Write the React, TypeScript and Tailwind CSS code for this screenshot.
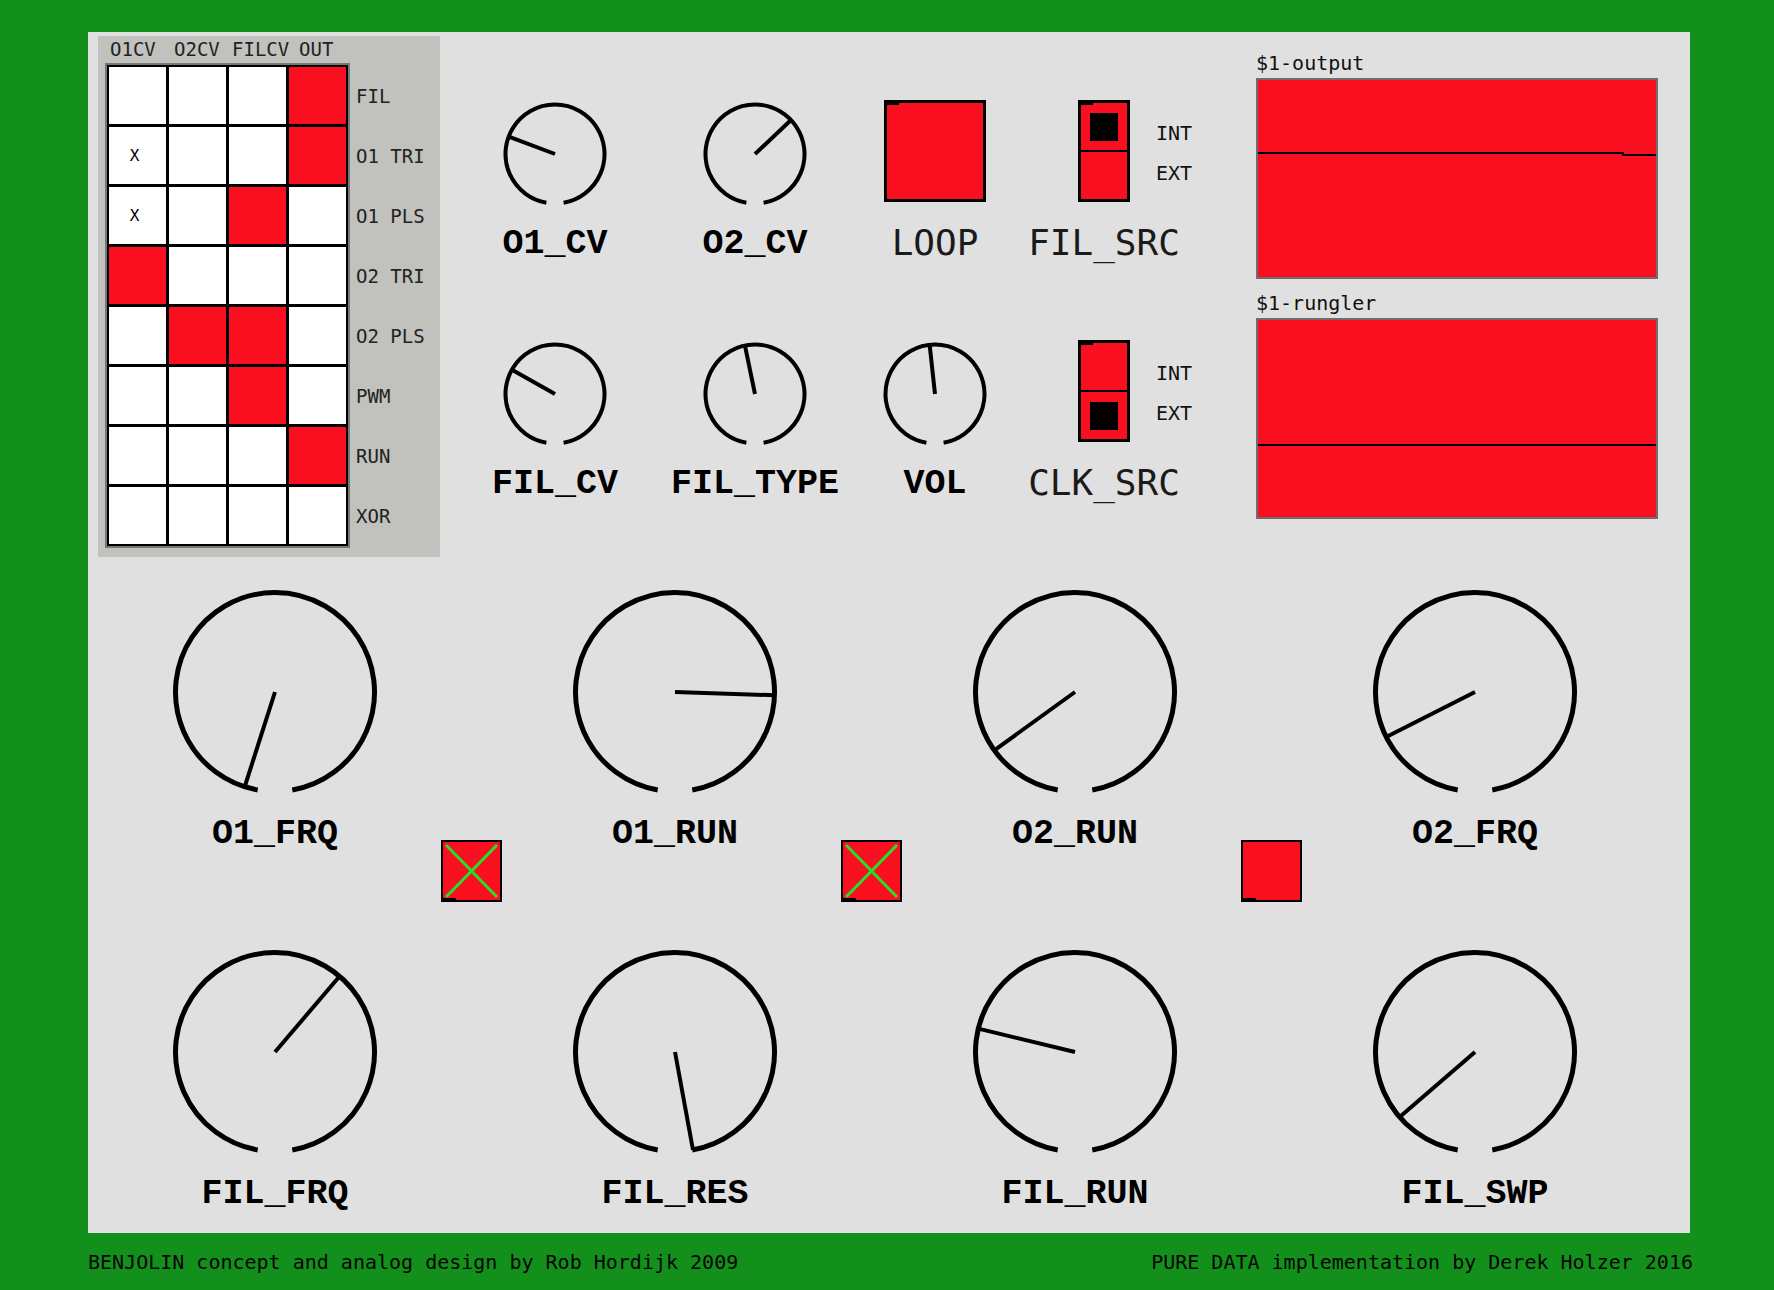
import React from 'react'

const matrix = [
  [0, 0, 0, 1],
  [2, 0, 0, 1],
  [2, 0, 1, 0],
  [1, 0, 0, 0],
  [0, 1, 1, 0],
  [0, 0, 1, 0],
  [0, 0, 0, 1],
  [0, 0, 0, 0],
]
const rowLabels = ['FIL', 'O1 TRI', 'O1 PLS', 'O2 TRI', 'O2 PLS', 'PWM', 'RUN', 'XOR']

const mono = { fontFamily: '"DejaVu Sans Mono", "Liberation Mono", monospace' }
const bold = { fontFamily: '"Liberation Mono", "DejaVu Sans Mono", monospace' }

function Knob({ size, r, sw, pw, dx, dy }: { size: number; r: number; sw: number; pw: number; dx: number; dy: number }) {
  const c = size / 2
  const a = (10 * Math.PI) / 180
  const x1 = c - r * Math.sin(a)
  const x2 = c + r * Math.sin(a)
  const y = c + r * Math.cos(a)
  const len = Math.hypot(dx, dy)
  const ex = c + (dx / len) * r
  const ey = c + (dy / len) * r
  return (
    <svg width={size} height={size} viewBox={`0 0 ${size} ${size}`}>
      <path d={`M${x1} ${y} A${r} ${r} 0 1 1 ${x2} ${y}`} fill="none" stroke="#000" strokeWidth={sw} />
      <line x1={c} y1={c} x2={ex} y2={ey} stroke="#000" strokeWidth={pw} />
    </svg>
  )
}

function SmallKnob({ label, dx, dy }: { label: string; dx: number; dy: number }) {
  return (
    <div className="flex h-[240px] flex-col items-center">
      <div className="flex h-[120px] w-full items-center justify-center">
        <Knob size={112} r={49.5} sw={4} pw={4} dx={dx} dy={dy} />
      </div>
      <div style={bold} className="mt-[12px] whitespace-nowrap text-[35px] font-bold leading-[36px] text-black">
        {label}
      </div>
    </div>
  )
}

function Radio({ label, sel }: { label: string; sel: number }) {
  return (
    <div className="flex h-[240px] flex-col items-center">
      <div className="-mt-[3px] flex h-[120px] w-full items-center pl-[49px]">
        <div className="relative flex h-[102px] w-[52px] shrink-0 flex-col border-[3px] border-black bg-[#f90f1f]">
          <span className="absolute -left-[3px] -top-[3px] h-[5px] w-[15px] bg-black" />
          <div className="flex h-[47px] items-center justify-center">
            {sel === 0 && <div className="h-[28px] w-[28px] bg-black" />}
          </div>
          <div className="h-[2px] bg-black" />
          <div className="flex h-[47px] items-center justify-center">
            {sel === 1 && <div className="h-[28px] w-[28px] bg-black" />}
          </div>
        </div>
        <div style={mono} className="ml-[26px] mt-[3px] flex shrink-0 flex-col gap-[20px] text-[20px] leading-[20px] text-[#111]">
          <span>INT</span>
          <span>EXT</span>
        </div>
      </div>
      <div style={mono} className="mt-[14px] whitespace-nowrap text-[36px] leading-[36px] text-[#1a1a1a]">
        {label}
      </div>
    </div>
  )
}

function Scope({ label, line }: { label: string; line: string }) {
  return (
    <div className="flex flex-col">
      <div style={mono} className="h-[24px] text-[20px] leading-[24px] text-[#111]">
        {label}
      </div>
      <div className="mt-[3px] h-[201px] w-[402px] border-2 border-[#6e6e6e] bg-[#f90f1f]">
        <svg width="398" height="197" viewBox="0 0 398 197">
          <polyline points={line} fill="none" stroke="#000" strokeWidth="2" />
        </svg>
      </div>
    </div>
  )
}

function BigKnob({ label, dx, dy }: { label: string; dx: number; dy: number }) {
  return (
    <div className="flex w-[300px] flex-col items-center">
      <Knob size={210} r={99.5} sw={5} pw={4} dx={dx} dy={dy} />
      <div style={bold} className="mt-[19px] whitespace-nowrap text-[35px] font-bold leading-[36px] text-black">
        {label}
      </div>
    </div>
  )
}

function Toggle({ on }: { on: boolean }) {
  return (
    <div className="w-[100px] pl-[16px] pt-[253px]">
      <div className="relative h-[62px] w-[61px] border-2 border-black bg-[#f90f1f]">
        {on && (
          <svg width="57" height="58" viewBox="0 0 57 58" className="block">
            <line x1="3" y1="3" x2="54" y2="55" stroke="#22e12b" strokeWidth="3" />
            <line x1="54" y1="3" x2="3" y2="55" stroke="#22e12b" strokeWidth="3" />
          </svg>
        )}
        <span className="absolute -bottom-[2px] -left-[2px] h-[4px] w-[15px] bg-black" />
      </div>
    </div>
  )
}

export default function App() {
  return (
    <div className="h-[1290px] w-[1774px] bg-[#13901b] pl-[88px] pt-[32px]">
      <div className="h-[1201px] w-[1602px] bg-[#e0e0e0]">
        <div className="flex h-[542px] items-start">
          {/* connection matrix */}
          <div className="ml-[10px] mt-[4px] h-[521px] w-[342px] shrink-0 bg-[#c1c1bd]">
            <div style={mono} className="flex h-[27px] pl-[12px] pt-[1px] text-[19px] leading-[24px] text-[#222]">
              <span className="w-[64px]">O1CV</span>
              <span className="w-[58px]">O2CV</span>
              <span className="w-[67px]">FILCV</span>
              <span>OUT</span>
            </div>
            <div className="flex pl-[7px]">
              <div className="border-2 border-[#777]">
                <div className="grid grid-cols-[repeat(4,57px)] grid-rows-[repeat(8,57px)] gap-[3px] bg-black p-[2px]">
                  {matrix.flat().map((v, i) => (
                    <div
                      key={i}
                      style={mono}
                      className={v === 1 ? 'bg-[#f90f1f]' : 'flex items-center justify-center bg-white pr-[6px] text-[16px] text-black'}
                    >
                      {v === 2 ? 'X' : ''}
                    </div>
                  ))}
                </div>
              </div>
              <div style={mono} className="ml-[6px] flex flex-col pt-[3px] text-[19px] text-[#222]">
                {rowLabels.map((l) => (
                  <div key={l} className="flex h-[60px] items-center whitespace-pre">
                    {l}
                  </div>
                ))}
              </div>
            </div>
          </div>

          {/* small controls */}
          <div className="ml-[40px] mt-[62px] w-[150px] shrink-0">
            <SmallKnob label="O1_CV" dx={-45} dy={-17} />
            <SmallKnob label="FIL_CV" dx={-46} dy={-26} />
          </div>
          <div className="ml-[50px] mt-[62px] w-[150px] shrink-0">
            <SmallKnob label="O2_CV" dx={35} dy={-33} />
            <SmallKnob label="FIL_TYPE" dx={-11} dy={-53} />
          </div>
          <div className="ml-[30px] mt-[62px] w-[150px] shrink-0">
            <div className="flex h-[240px] flex-col items-center">
              <div className="-mt-[3px] flex h-[120px] w-full items-center justify-center">
                <div className="relative h-[102px] w-[102px] border-[3px] border-black bg-[#f90f1f]">
                  <span className="absolute -left-[3px] -top-[3px] h-[5px] w-[15px] bg-black" />
                </div>
              </div>
              <div style={mono} className="mt-[14px] text-[36px] leading-[36px] text-[#1a1a1a]">
                LOOP
              </div>
            </div>
            <SmallKnob label="VOL" dx={-6} dy={-55} />
          </div>
          <div className="ml-[19px] mt-[62px] w-[150px] shrink-0">
            <Radio label="FIL_SRC" sel={0} />
            <Radio label="CLK_SRC" sel={1} />
          </div>

          {/* scopes */}
          <div className="ml-[77px] mt-[19px] flex shrink-0 flex-col gap-[12px]">
            <Scope label="$1-output" line="0,73 365,73 365,75 398,75" />
            <Scope label="$1-rungler" line="0,125 398,125" />
          </div>
        </div>

        {/* big knobs */}
        <div className="ml-[37px] mt-[13px] flex flex-col">
          <div className="flex h-[360px]">
            <BigKnob label="O1_FRQ" dx={-32} dy={100} />
            <Toggle on={true} />
            <BigKnob label="O1_RUN" dx={91} dy={3} />
            <Toggle on={true} />
            <BigKnob label="O2_RUN" dx={-72} dy={52} />
            <Toggle on={false} />
            <BigKnob label="O2_FRQ" dx={-79} dy={40} />
          </div>
          <div className="flex">
            <BigKnob label="FIL_FRQ" dx={58} dy={-68} />
            <div className="w-[100px]" />
            <BigKnob label="FIL_RES" dx={16} dy={87} />
            <div className="w-[100px]" />
            <BigKnob label="FIL_RUN" dx={-87} dy={-21} />
            <div className="w-[100px]" />
            <BigKnob label="FIL_SWP" dx={-66} dy={57} />
          </div>
        </div>
      </div>
      <div style={mono} className="mt-[17px] flex w-[1605px] justify-between text-[20px] leading-[24px] text-[#050505]">
        <span>BENJOLIN concept and analog design by Rob Hordijk 2009</span>
        <span>PURE DATA implementation by Derek Holzer 2016</span>
      </div>
    </div>
  )
}
